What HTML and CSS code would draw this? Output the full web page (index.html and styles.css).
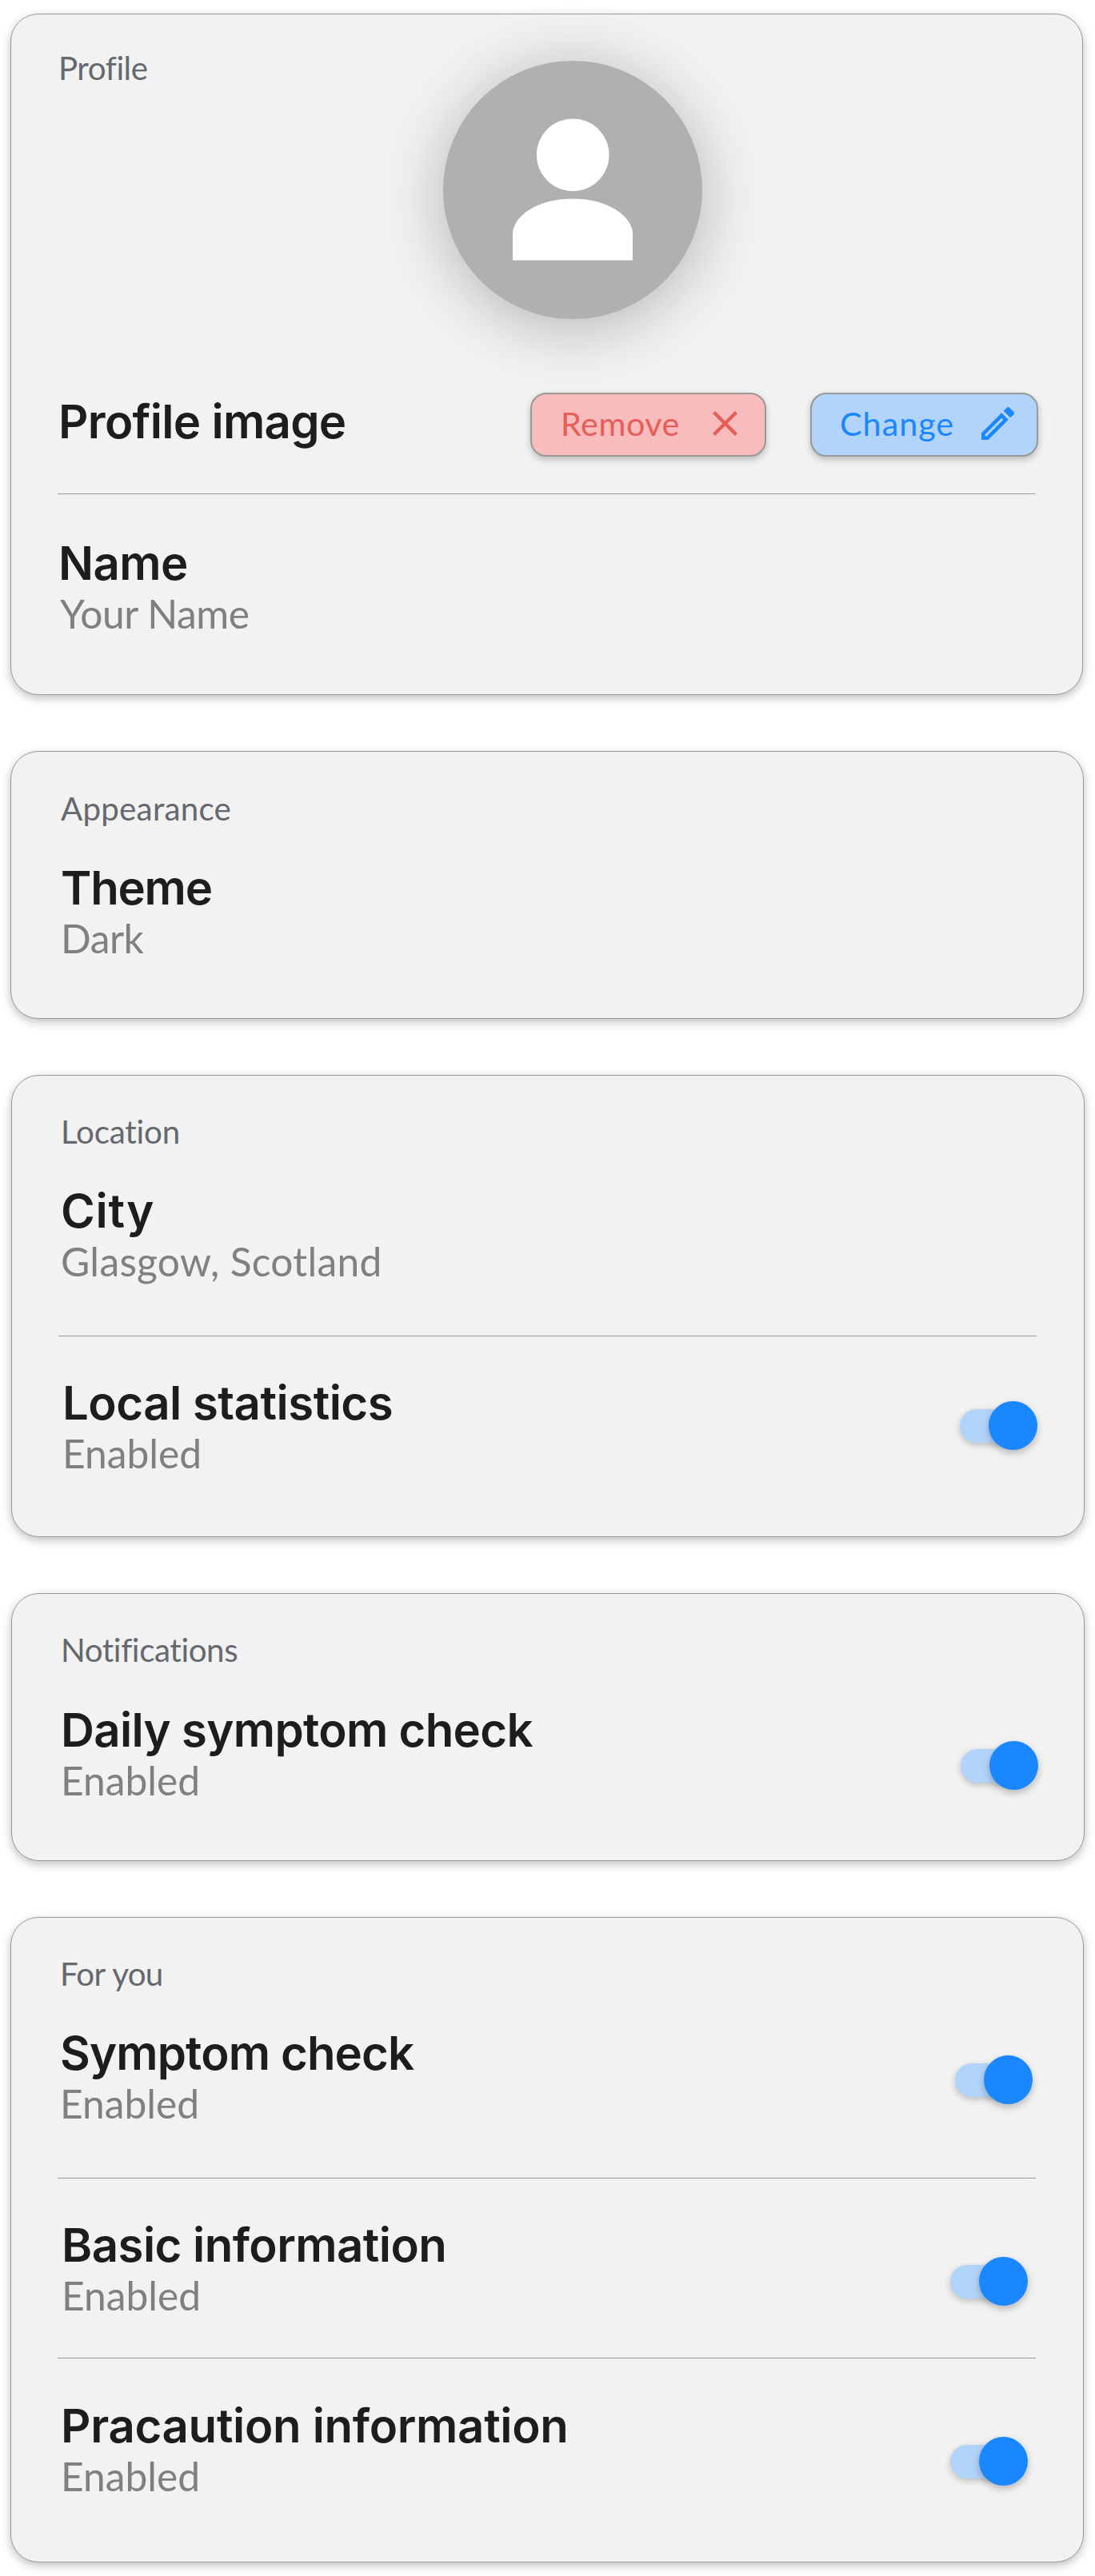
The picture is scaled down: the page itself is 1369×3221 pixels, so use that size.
FILE: index.html
```
<!DOCTYPE html>
<html lang="en">
<head>
<meta charset="utf-8">
<title>Settings</title>
<link rel="stylesheet" href="styles.css">
</head>
<body>
<main class="settings">
  <section class="card card-profile">
    <header class="profile-header">
      <h2 class="label label-profile">Profile</h2>
      <div class="avatar">
        <svg width="150" height="178" viewBox="0 0 150 178" fill="#fff">
          <circle cx="75.2" cy="45.7" r="45.3"/>
          <path d="M0 177.4V145C0 122 31 100.6 75 100.6S150 122 150 145V177.4Z"/>
        </svg>
      </div>
    </header>
    <div class="row row-image">
      <h3 class="title title-image">Profile image</h3>
      <div class="actions">
        <button class="btn btn-remove">
          <span class="btn-text">Remove</span>
          <svg width="31" height="31" viewBox="5 5 14 14" fill="currentColor"><path d="M19 6.41L17.59 5 12 10.59 6.41 5 5 6.41 10.59 12 5 17.59 6.41 19 12 13.41 17.59 19 19 17.59 13.41 12z"/></svg>
        </button>
        <button class="btn btn-change">
          <span class="btn-text">Change</span>
          <svg width="41" height="41" viewBox="3 3 18 18" fill="currentColor"><path d="M14.06 9.02l.92.92L5.92 19H5v-.92l9.06-9.06M17.66 3c-.25 0-.51.1-.7.29l-1.83 1.83 3.75 3.75 1.83-1.83c.39-.39.39-1.02 0-1.41l-2.34-2.34c-.2-.2-.45-.29-.71-.29zm-3.6 3.19L3 17.25V21h3.75L17.81 9.94l-3.75-3.75z"/></svg>
        </button>
      </div>
    </div>
    <hr class="divider">
    <div class="row row-name">
      <div class="text">
        <h3 class="title title-name">Name</h3>
        <p class="value value-name">Your Name</p>
      </div>
    </div>
  </section>

  <section class="card card-appearance">
    <h2 class="label label-appearance">Appearance</h2>
    <div class="row">
      <div class="text">
        <h3 class="title title-theme">Theme</h3>
        <p class="value value-theme">Dark</p>
      </div>
    </div>
  </section>

  <section class="card card-location">
    <h2 class="label">Location</h2>
    <div class="row">
      <div class="text">
        <h3 class="title title-city">City</h3>
        <p class="value value-city">Glasgow, Scotland</p>
      </div>
    </div>
    <hr class="divider">
    <div class="row row-local">
      <div class="text">
        <h3 class="title title-local">Local statistics</h3>
        <p class="value">Enabled</p>
      </div>
      <div class="toggle"><span class="track"></span><span class="thumb"></span></div>
    </div>
  </section>

  <section class="card card-notifications">
    <h2 class="label label-notifications">Notifications</h2>
    <div class="row row-daily">
      <div class="text">
        <h3 class="title title-daily">Daily symptom check</h3>
        <p class="value">Enabled</p>
      </div>
      <div class="toggle"><span class="track"></span><span class="thumb"></span></div>
    </div>
  </section>

  <section class="card card-foryou">
    <h2 class="label label-foryou">For you</h2>
    <div class="row row-symptom">
      <div class="text">
        <h3 class="title title-symptom">Symptom check</h3>
        <p class="value">Enabled</p>
      </div>
      <div class="toggle"><span class="track"></span><span class="thumb"></span></div>
    </div>
    <hr class="divider">
    <div class="row row-basic">
      <div class="text">
        <h3 class="title title-basic">Basic information</h3>
        <p class="value">Enabled</p>
      </div>
      <div class="toggle"><span class="track"></span><span class="thumb"></span></div>
    </div>
    <hr class="divider divider-tight">
    <div class="row row-precaution">
      <div class="text">
        <h3 class="title title-precaution">Pracaution information</h3>
        <p class="value">Enabled</p>
      </div>
      <div class="toggle"><span class="track"></span><span class="thumb"></span></div>
    </div>
  </section>
</main>
</body>
</html>
```
FILE: styles.css
```
* {
  box-sizing: border-box;
  margin: 0;
  padding: 0;
}

body {
  background: #fff;
  font-family: Lato, "Open Sans", sans-serif;
  font-variant-ligatures: none;
  color: #1d1d1d;
}

.settings {
  display: flex;
  flex-direction: column;
  align-items: flex-start;
  gap: 70px;
  padding: 17px 0 17px 13px;
}

.card {
  width: 1342px;
  padding: 0 59px 0 58px;
  background: #f2f2f2;
  border: 1px solid #999;
  border-radius: 35px;
  box-shadow: 0 4px 12px rgba(0, 0, 0, 0.25);
}

.card-profile { width: 1341px; height: 852px; }
.card-appearance { height: 335px; padding-top: 47px; }
.card-location { height: 578px; padding-top: 46px; margin-left: 1px; }
.card-notifications { height: 335px; padding-top: 46px; margin-left: 1px; }
.card-foryou { height: 807px; padding-top: 46px; }

/* Text */

.label {
  margin-left: 3px;
  font-size: 40.3px;
  font-weight: 400;
  line-height: 48px;
  letter-spacing: -0.2px;
  color: #65686e;
}

.label-profile { margin: 43px 0 0 1px; letter-spacing: -0.45px; }
.label-appearance { margin-left: 4px; letter-spacing: 0.24px; }
.label-notifications { letter-spacing: -0.4px; }
.label-foryou { letter-spacing: -0.7px; word-spacing: 1px; }

.title {
  margin-top: 2px;
  font-family: Inter, "Open Sans", sans-serif;
  font-size: 58.1px;
  font-weight: 600;
  line-height: 68px;
  white-space: nowrap;
}

.title-image { margin: 2px 0 0 1px; letter-spacing: -0.69px; }
.title-name { letter-spacing: -0.61px; }
.title-theme { letter-spacing: -1.22px; }
.title-city { letter-spacing: 0.8px; }
.title-local { letter-spacing: -0.49px; }
.title-daily { letter-spacing: -0.67px; }
.title-symptom { letter-spacing: -0.86px; }
.title-basic { letter-spacing: -0.54px; }
.title-precaution { letter-spacing: -0.3px; }

.value {
  font-size: 49.7px;
  line-height: 59px;
  color: #808080;
}

.value-name { margin-left: 2px; letter-spacing: -0.4px; }
.value-theme { letter-spacing: -0.46px; }
.value-city { letter-spacing: 0.3px; }

/* Rows */

.row {
  display: flex;
  justify-content: space-between;
  align-items: flex-start;
  margin-top: 39px;
  padding-left: 3px;
}

.card-appearance .row { padding-left: 4px; }
.card-profile .row-image { margin: 92px -4px 0 0; padding-left: 0; }
.card-profile .row-name { margin-top: 50px; padding-left: 1px; }
.row-local { margin-top: 47px; padding-left: 5px; }
.row-daily { margin-top: 40px; }
.row-basic { margin-top: 47px; padding-left: 5px; }
.row-precaution { margin-top: 48px; padding-left: 4px; }

.divider {
  height: 1px;
  margin-top: 63px;
  border: 0;
  background: #999;
}

.card-profile .divider { margin-top: 46px; }
.card-foryou .divider-tight { margin-top: 48px; }

/* Profile header */

.profile-header {
  display: flex;
  align-items: flex-start;
}

.label-profile { width: 481px; }

.avatar {
  display: flex;
  justify-content: center;
  width: 324px;
  height: 323px;
  margin-top: 58px;
  padding-top: 72px;
  border-radius: 50%;
  background: #b0b0b0;
  box-shadow: 0 10px 80px rgba(0, 0, 0, 0.26);
}

.actions {
  display: flex;
  gap: 55px;
}

.btn {
  display: flex;
  align-items: center;
  justify-content: space-between;
  height: 80px;
  padding: 0 34px 4px 36px;
  border: 2px solid #999;
  border-radius: 20px;
  box-shadow: 0 4px 8px rgba(0, 0, 0, 0.22);
  font-family: inherit;
  font-size: 41.3px;
  line-height: 48px;
}

.btn-remove { width: 295px; background: #f7bcbb; color: #e75d58; letter-spacing: 0.54px; }
.btn-change { width: 285px; padding-right: 28px; padding-left: 35px; background: #b3d4fa; color: #1a87ff; letter-spacing: 1px; }

/* Toggle */

.toggle {
  display: flex;
  align-items: center;
}

.track {
  width: 66px;
  height: 42px;
  margin-right: -30px;
  border-radius: 21px;
  background: #b3d4fa;
  box-shadow: 0 3px 8px rgba(0, 0, 0, 0.22);
}

.thumb {
  width: 61px;
  height: 61px;
  border-radius: 50%;
  background: #1a87ff;
  box-shadow: 0 4px 10px rgba(0, 0, 0, 0.25);
}

.row-local .toggle { margin: 34px -1px 0 0; }
.row-daily .toggle { margin: 50px -2px 0 0; }
.row-symptom .toggle { margin: 39px 4px 0 0; }
.row-basic .toggle { margin: 51px 10px 0 0; }
.row-precaution .toggle { margin: 50px 10px 0 0; }
```
